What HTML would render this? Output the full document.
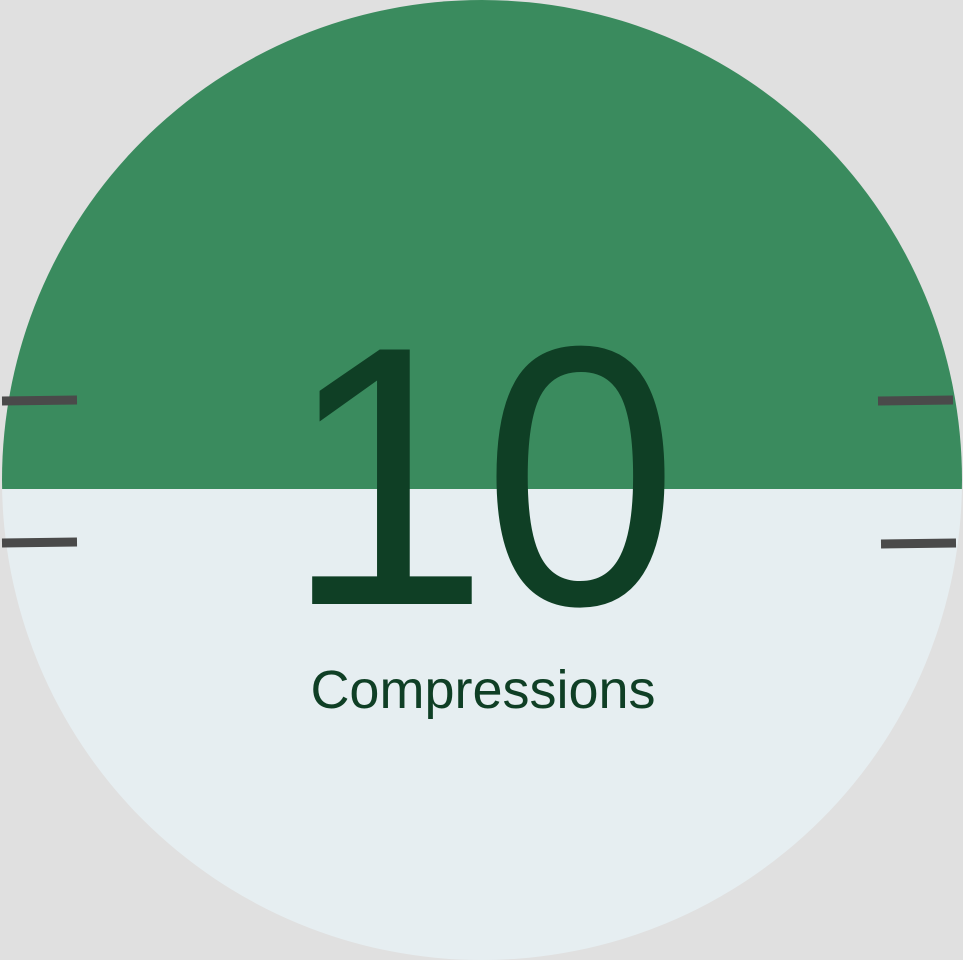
<!DOCTYPE html>
<html><head><style>
html,body{margin:0;padding:0;background:#e0e0e0;width:963px;height:960px;overflow:hidden;}
svg{display:block}
</style></head><body>
<svg width="963" height="960" viewBox="0 0 963 960">
<rect width="963" height="960" fill="#e0e0e0"/>
<defs><clipPath id="c"><circle cx="482" cy="480" r="480"/></clipPath></defs>
<g clip-path="url(#c)">
<rect x="0" y="0" width="963" height="489" fill="#3a8b5e"/>
<rect x="0" y="489" width="963" height="480" fill="#e6eef1"/>
</g>
<g stroke="#4a4a4a" stroke-width="9">
<line x1="2" y1="401" x2="77" y2="400"/>
<line x1="2" y1="543" x2="77" y2="542"/>
<line x1="878" y1="401" x2="953" y2="400"/>
<line x1="881" y1="544" x2="956" y2="543"/>
</g>
<text x="284" y="604" font-family="Liberation Sans, sans-serif" font-size="370" fill="#0f3f25">1</text>
<text x="0" y="0" text-anchor="middle" transform="translate(580.5 604) scale(0.95 1)" font-family="Liberation Sans, sans-serif" font-size="370" fill="#0f3f25">0</text>
<text x="483" y="708" text-anchor="middle" font-family="Liberation Sans, sans-serif" font-size="54" fill="#0f3f25">Compressions</text>
</svg>
</body></html>
